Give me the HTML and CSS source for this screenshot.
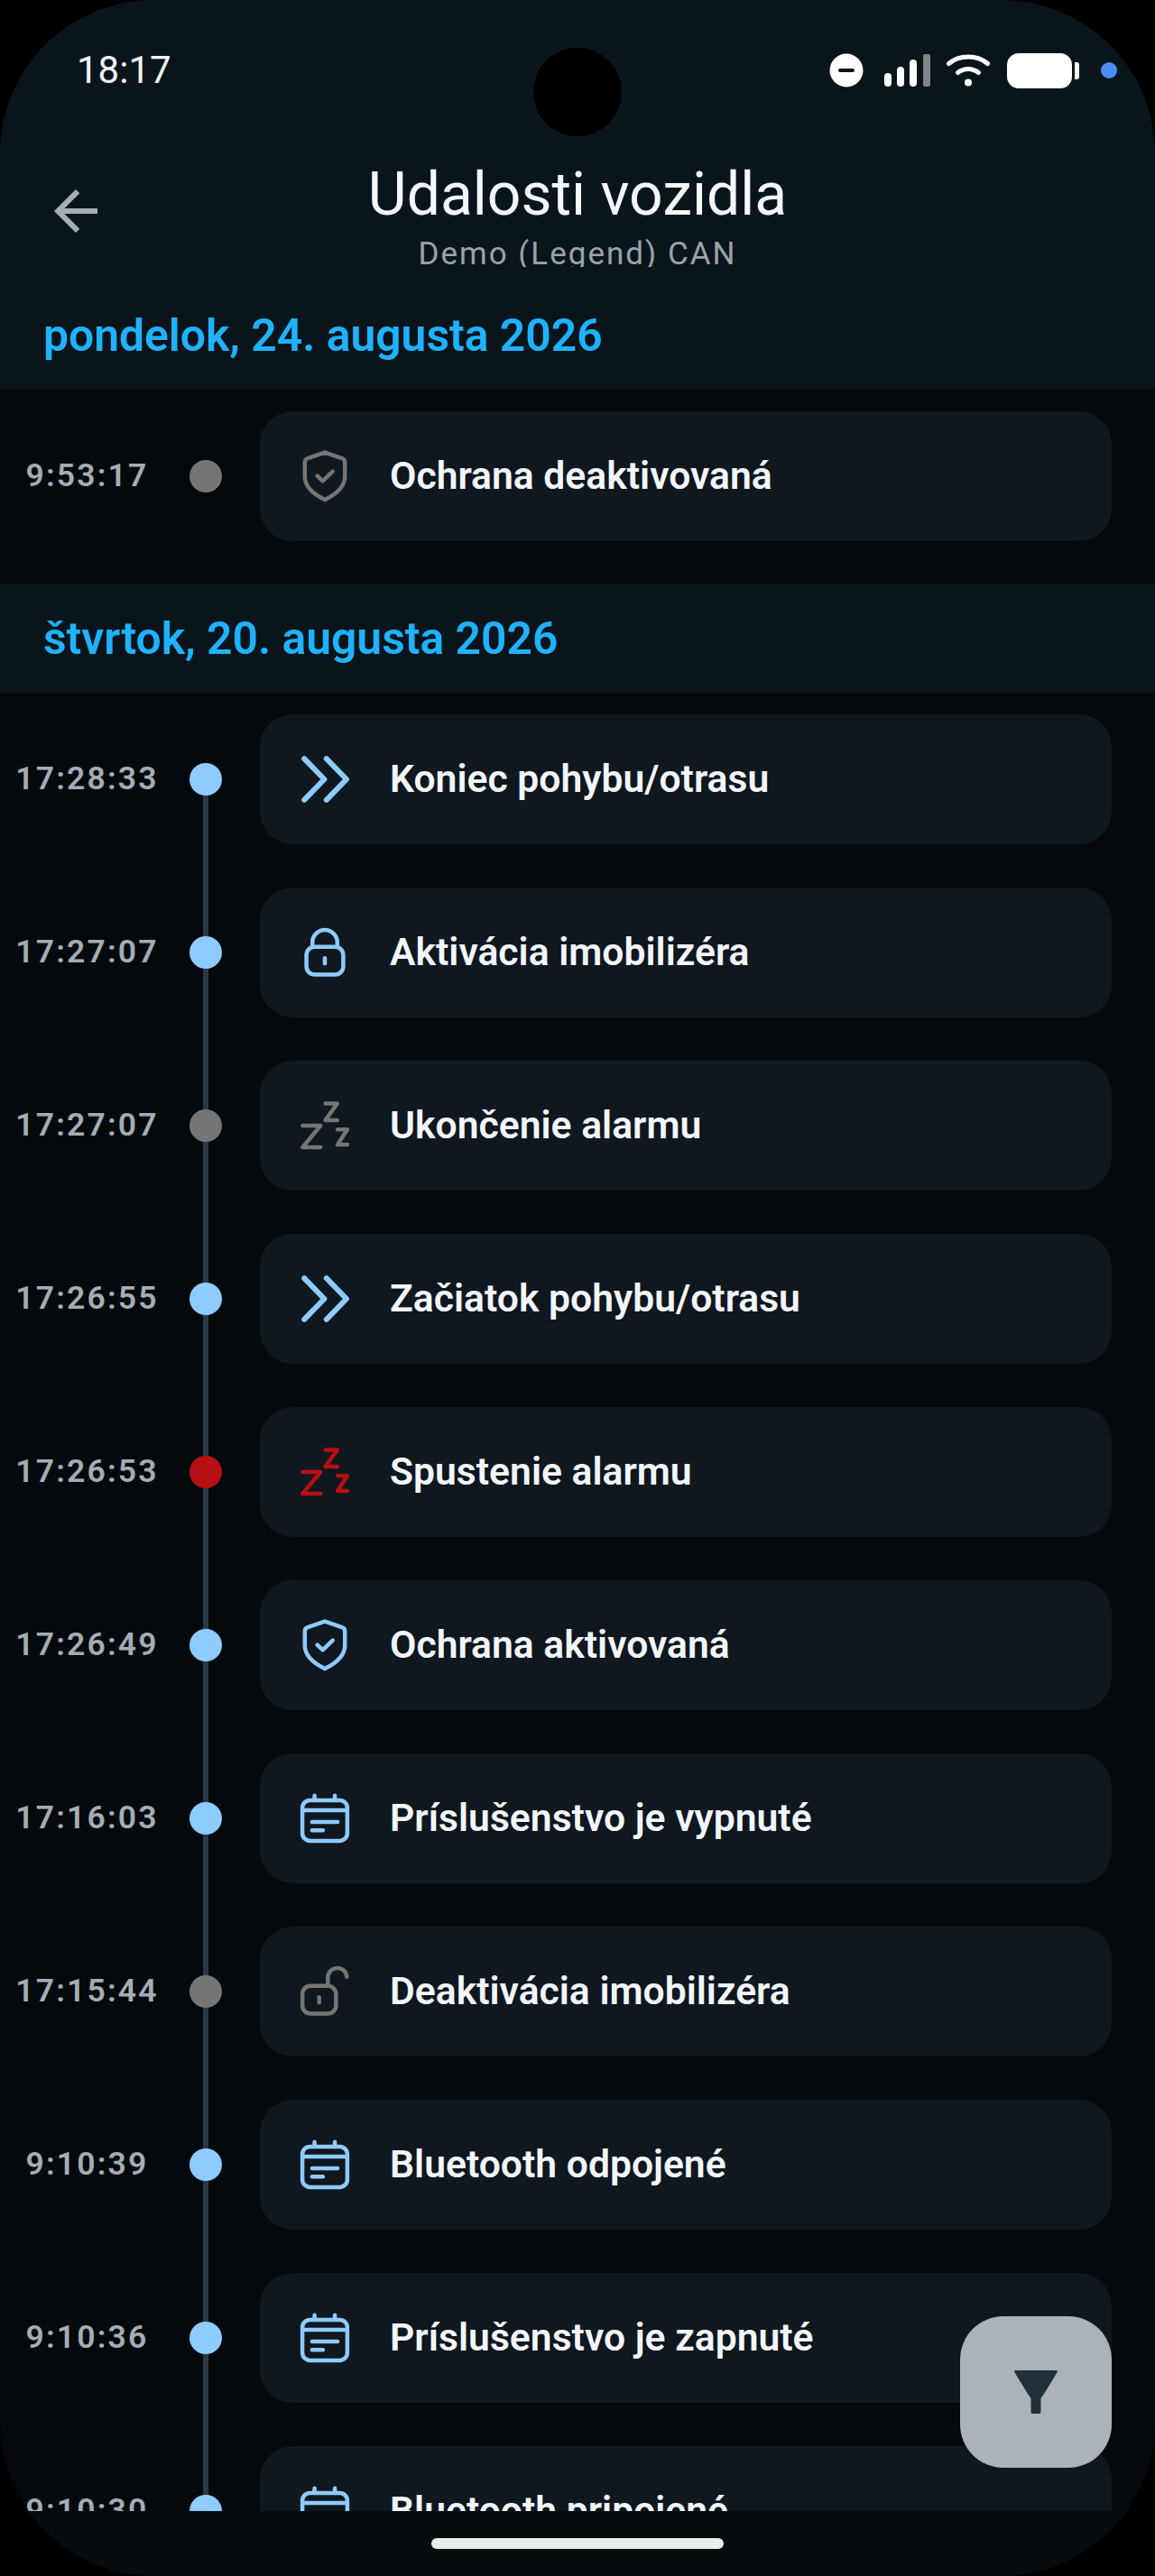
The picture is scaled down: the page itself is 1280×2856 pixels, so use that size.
FILE: index.html
```html
<!DOCTYPE html>
<html>
<head>
    <meta charset="UTF-8">
    <meta name="viewport" content="width=device-width, initial-scale=1.0">
    <title>Udalosti vozidla</title>
    <link rel="stylesheet" href="styles.css">
</head>
<body>
    <!-- Icons used by the event cards -->
    <svg class="defs" xmlns="http://www.w3.org/2000/svg">
        <symbol id="i-shield" viewBox="0 0 24 24">
            <path d="M12 3.200l6.300 2.200c.7.2 1.100.8 1.100 1.500v5.200c0 3.400-2.700 6.300-7.400 8.600-4.700-2.300-7.400-5.200-7.400-8.600V6.900c0-.7.4-1.300 1.100-1.500z"/>
            <path d="M9.200 11.900l2 1.900 3.700-3.600"/>
        </symbol>
        <symbol id="i-chevrons" viewBox="0 0 24 24">
            <path class="thick" d="M4.400 4.400l7.400 7.600-7.400 7.600M12.600 4.400l7.400 7.600-7.400 7.600"/>
        </symbol>
        <symbol id="i-lock" viewBox="0 0 24 24">
            <rect x="5.200" y="9.900" width="13.600" height="10.300" rx="3"/>
            <path d="M7.400 9.900V8.300a4.600 4.600 0 0 1 9.200 0v1.600M12 14.100v2"/>
        </symbol>
        <symbol id="i-unlock" viewBox="0 0 24 24">
            <rect x="3.700" y="9.900" width="12.400" height="10.300" rx="3"/>
            <path d="M13.100 9.900V7a3.500 3.500 0 0 1 7-.4M9.900 14.100v2"/>
        </symbol>
        <symbol id="i-zzz" viewBox="0 0 24 24">
            <path d="M3.800 12h6.600l-6.600 8h6.600M12.200 3.800h4.400l-4.400 6.200h4.400M16.700 13.400h3.600L16.700 19h3.600"/>
        </symbol>
        <symbol id="i-calendar" viewBox="0 0 24 24">
            <rect x="3.700" y="5.300" width="16.600" height="15" rx="2.800"/>
            <path d="M3.700 9h16.600M8.200 3.600v1.700M15.700 3.600v1.700M7.300 13.300h9.400M7.300 16.400h4"/>
        </symbol>
    </svg>

    <div class="screen">
        <div class="camera"></div>

        <header class="top">
            <div class="statusbar">
                <span class="clock">18:17</span>
                <div class="status-icons">
                    <svg class="dnd" width="38" height="38" viewBox="0 0 38 38"><circle cx="19" cy="19" r="18.500" fill="#fff"/><rect x="10" y="17" width="18" height="4" rx="2" fill="#0a151b"/></svg>
                    <svg class="signal" width="52" height="38" viewBox="0 0 52 38">
                        <rect x="0" y="22" width="8" height="15" rx="4" fill="#fff"/>
                        <rect x="14" y="15" width="8" height="22" rx="4" fill="#fff"/>
                        <rect x="28" y="7" width="8" height="30" rx="4" fill="#fff"/>
                        <rect x="43" y="1" width="8" height="36" rx="2" fill="#7f8487"/>
                    </svg>
                    <svg class="wifi" width="50" height="38" viewBox="0 0 50 38" fill="none" stroke="#fff" stroke-width="5" stroke-linecap="round">
                        <path d="M3.500 11.500C15 1.500 35 1.500 46.500 11.500"/>
                        <path d="M13.500 21.500c7-5.500 16-5.500 23 0"/>
                        <circle cx="25" cy="32.500" r="4" fill="#fff" stroke="none"/>
                    </svg>
                    <div class="battery"><div class="battery-nub"></div></div>
                    <div class="notify-dot"></div>
                </div>
            </div>
            <div class="appbar">
                <svg class="back" width="72" height="72" viewBox="0 0 24 24"><path fill="#a5aeb3" d="M20 11H7.830l5.590-5.590L12 4l-8 8 8 8 1.410-1.410L7.830 13H20v-2z"/></svg>
                <div class="titles">
                    <h1>Udalosti vozidla</h1>
                    <p class="subtitle">Demo (Legend) CAN</p>
                </div>
            </div>
        </header>

        <main class="events">
            <h2 class="day day-first">pondelok, 24. augusta 2026</h2>
            <ul class="day-list">
                <li class="event gray last">
                    <span class="time">9:53:17</span><span class="dot"></span>
                    <div class="card"><svg class="icon"><use href="#i-shield"/></svg><span>Ochrana deaktivovaná</span></div>
                </li>
            </ul>

            <h2 class="day">štvrtok, 20. augusta 2026</h2>
            <ul class="day-list">
                <li class="event blue">
                    <span class="time">17:28:33</span><span class="dot"></span>
                    <div class="card"><svg class="icon"><use href="#i-chevrons"/></svg><span>Koniec pohybu/otrasu</span></div>
                </li>
                <li class="event blue">
                    <span class="time">17:27:07</span><span class="dot"></span>
                    <div class="card"><svg class="icon"><use href="#i-lock"/></svg><span>Aktivácia imobilizéra</span></div>
                </li>
                <li class="event gray">
                    <span class="time">17:27:07</span><span class="dot"></span>
                    <div class="card"><svg class="icon"><use href="#i-zzz"/></svg><span>Ukončenie alarmu</span></div>
                </li>
                <li class="event blue">
                    <span class="time">17:26:55</span><span class="dot"></span>
                    <div class="card"><svg class="icon"><use href="#i-chevrons"/></svg><span>Začiatok pohybu/otrasu</span></div>
                </li>
                <li class="event red">
                    <span class="time">17:26:53</span><span class="dot"></span>
                    <div class="card"><svg class="icon"><use href="#i-zzz"/></svg><span>Spustenie alarmu</span></div>
                </li>
                <li class="event blue">
                    <span class="time">17:26:49</span><span class="dot"></span>
                    <div class="card"><svg class="icon"><use href="#i-shield"/></svg><span>Ochrana aktivovaná</span></div>
                </li>
                <li class="event blue">
                    <span class="time">17:16:03</span><span class="dot"></span>
                    <div class="card"><svg class="icon"><use href="#i-calendar"/></svg><span>Príslušenstvo je vypnuté</span></div>
                </li>
                <li class="event gray">
                    <span class="time">17:15:44</span><span class="dot"></span>
                    <div class="card"><svg class="icon"><use href="#i-unlock"/></svg><span>Deaktivácia imobilizéra</span></div>
                </li>
                <li class="event blue">
                    <span class="time">9:10:39</span><span class="dot"></span>
                    <div class="card"><svg class="icon"><use href="#i-calendar"/></svg><span>Bluetooth odpojené</span></div>
                </li>
                <li class="event blue">
                    <span class="time">9:10:36</span><span class="dot"></span>
                    <div class="card"><svg class="icon"><use href="#i-calendar"/></svg><span>Príslušenstvo je zapnuté</span></div>
                </li>
                <li class="event blue">
                    <span class="time">9:10:30</span><span class="dot"></span>
                    <div class="card"><svg class="icon"><use href="#i-calendar"/></svg><span>Bluetooth pripojené</span></div>
                </li>
            </ul>
        </main>

        <button class="fab">
            <svg width="48" height="48" viewBox="0 0 48 48"><path fill="#22303c" d="M1.500 0h45c1.200 0 1.800 1 1.200 2L34 24.500 29.500 31v15c0 1.200-.8 2-2 2h-7c-1.200 0-2-.8-2-2V31L14 24.500.300 2C-.300 1 .300 0 1.500 0z"/></svg>
        </button>

        <footer class="navbar"><div class="home-pill"></div></footer>
    </div>
</body>
</html>
```

FILE: styles.css
```css
* {
    box-sizing: border-box;
}

body {
    margin: 0;
    background: #000;
    font-family: Roboto, "Liberation Sans", sans-serif;
    color: #f3f6fa;
}

.defs {
    display: none;
}

.screen {
    position: relative;
    display: flex;
    flex-direction: column;
    width: 1280px;
    height: 2856px;
    overflow: hidden;
    border-radius: 170px;
    background: #04090d;
}

.camera {
    position: absolute;
    top: 53px;
    left: 591px;
    width: 98px;
    height: 98px;
    border-radius: 50%;
    background: #000;
}

/* Header */
.top {
    flex: none;
    height: 300px;
    background: #0a151b;
}

.statusbar {
    display: flex;
    justify-content: space-between;
    align-items: center;
    height: 156px;
    padding: 0 42px 0 85px;
}

.clock {
    font-size: 42px;
    line-height: 1;
}

.status-icons {
    display: flex;
    align-items: center;
}

.signal {
    margin-left: 23px;
}

.wifi {
    margin-left: 16px;
}

.battery {
    position: relative;
    width: 72px;
    height: 39px;
    margin-left: 18px;
    border-radius: 13px;
    background: #fff;
}

.battery-nub {
    position: absolute;
    top: 10px;
    right: -8px;
    width: 5px;
    height: 19px;
    border-radius: 0 3px 3px 0;
    background: #fff;
}

.notify-dot {
    width: 18px;
    height: 18px;
    margin-left: 32px;
    border-radius: 50%;
    background: #4d8df6;
}

.appbar {
    position: relative;
    height: 144px;
}

.back {
    position: absolute;
    top: 42px;
    left: 48px;
}

.titles {
    text-align: center;
}

h1 {
    margin: 0;
    padding-top: 22px;
    font-size: 66px;
    font-weight: 400;
    line-height: 76px;
}

.subtitle {
    height: 42px;
    margin: 0;
    overflow: hidden;
    color: #9aa3ab;
    font-size: 35px;
    line-height: 55px;
    letter-spacing: 2px;
}

/* Event list */
.events {
    flex: 1;
    min-height: 0;
    overflow: hidden;
}

.day {
    height: 120px;
    margin: 0;
    padding-left: 48px;
    background: #0a151b;
    color: #1fb2ff;
    font-size: 49.8px;
    font-weight: 600;
    line-height: 120px;
}

.day-first {
    height: 132px;
    padding-top: 12px;
}

.day-list {
    margin: 0;
    padding: 24px 48px 0 0;
    list-style: none;
}

.event {
    position: relative;
    display: flex;
    align-items: center;
    height: 144px;
    margin-bottom: 48px;
}

/* connector down to the next dot */
.event::after {
    content: "";
    position: absolute;
    top: 72px;
    left: 225px;
    width: 6px;
    height: 192px;
    background: #2c3a47;
}

.event.last::after {
    display: none;
}

.time {
    width: 191px;
    padding: 0 0 2px 2px;
    color: #a5adb4;
    font-size: 35.5px;
    font-weight: 600;
    letter-spacing: 2.2px;
    text-align: center;
}

.dot {
    position: relative;
    z-index: 1;
    flex: none;
    width: 36px;
    height: 36px;
    margin: 0 42px 0 19px;
    border-radius: 50%;
}

.card {
    display: flex;
    flex: 1;
    align-items: center;
    gap: 36px;
    height: 144px;
    padding-left: 36px;
    border-radius: 36px;
    background: #0f171f;
    font-size: 42.67px;
    font-weight: 600;
}

.card span {
    padding-bottom: 2px;
}

.icon {
    flex: none;
    width: 72px;
    height: 72px;
    fill: none;
    stroke-width: 1.5;
    stroke-linecap: round;
    stroke-linejoin: round;
}

.thick {
    stroke-width: 2;
}

.blue .dot { background: #8ecbff; }
.blue .icon { stroke: #8ecbff; }
.gray .dot { background: #757575; }
.gray .icon { stroke: #757575; }
.red .dot { background: #b80f14; }
.red .icon { stroke: #b80f14; }

/* Floating filter button */
.fab {
    position: absolute;
    top: 2568px;
    left: 1064px;
    display: flex;
    justify-content: center;
    align-items: center;
    width: 168px;
    height: 168px;
    padding: 0;
    border: none;
    border-radius: 48px;
    background: #abb2b9;
}

.navbar {
    flex: none;
    display: flex;
    justify-content: center;
    height: 72px;
    padding-top: 30px;
    background: #060b0f;
}

.home-pill {
    width: 324px;
    height: 12px;
    border-radius: 6px;
    background: #e9ecea;
}
```
